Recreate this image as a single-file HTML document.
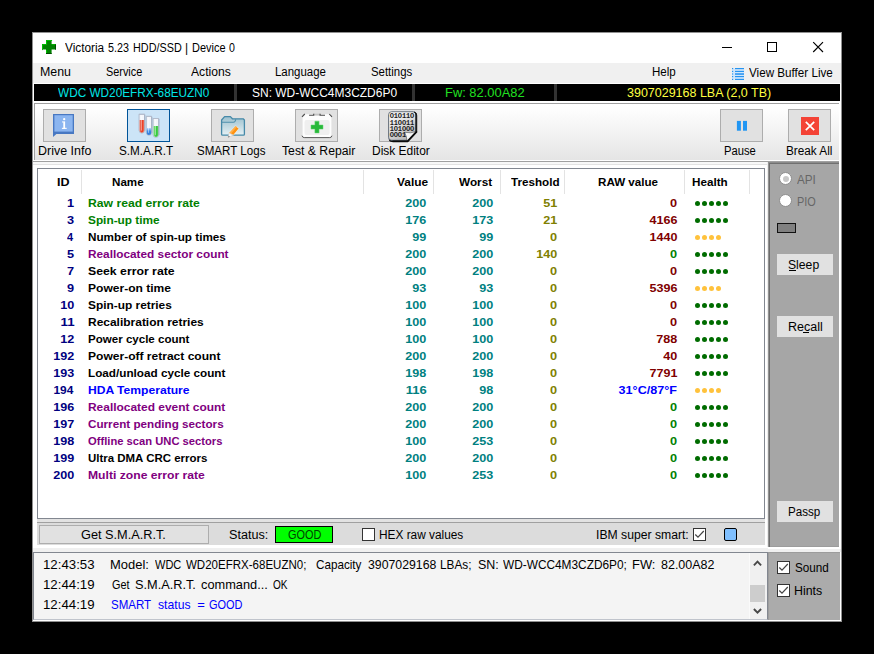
<!DOCTYPE html><html><head><meta charset="utf-8"><title>Victoria 5.23 HDD/SSD | Device 0</title><style>
html,body{margin:0;padding:0;background:#000;}
body{width:874px;height:654px;overflow:hidden;position:relative;font-family:"Liberation Sans",sans-serif;}
div,span,i,svg{position:absolute;box-sizing:border-box;}
.t{white-space:pre;font-style:normal;}
.d{width:5.2px;height:5.2px;border-radius:50%;}
.btn{background:#e1e1e1;border:1px solid #adadad;}
.pbtn{background:#e1e1e1;}
.sep{width:1px;background:#e3e3e3;top:170px;height:24px;}
.bsep{top:84px;height:17px;width:3px;background:#323232;}
.cb{width:13px;height:13px;background:#fff;border:1px solid #333;}
</style></head><body>
<div id="win" style="left:32px;top:32px;width:810px;height:590px;background:#fff;border:1px solid #909090;"></div>
<div id="titlebar" style="left:33px;top:33px;width:808px;height:30px;background:#fff;"></div>
<svg style="left:42px;top:40px" width="14" height="14" viewBox="0 0 14 14"><path d="M4 0h5.600v4.100h4.400v5.500h-4.400v4.400h-5.600v-4.400h-4v-5.500h4z" fill="#008200"/><path d="M4 14v-4.400M0 9.600v-5.500h4v-4.100h5.600" transform="translate(0.500,0.500)" stroke="#00c400" stroke-width="1" fill="none"/><path d="M9.600 4.100h4.400" transform="translate(0,0.500)" stroke="#00b400" stroke-width="1" fill="none"/><path d="M4 13.500h5.600M13.500 4.600v5" stroke="#004a00" stroke-width="1" fill="none"/></svg>
<svg style="left:715px;top:36px" width="120" height="22" viewBox="0 0 120 22"><g stroke="#000" stroke-width="1" fill="none"><path d="M7 11.500h10"/><rect x="52.500" y="6.500" width="9" height="9"/><path d="M98.200 6.200l9.800 9.800M108 6.200l-9.800 9.800" stroke-width="1.150"/></g></svg>
<div id="menubar" style="left:33px;top:63px;width:808px;height:20px;background:#f0f0f0;"></div>
<svg style="left:731px;top:67px" width="14" height="14" viewBox="0 0 14 14"><rect x="1" y="1.600" width="12" height="10.800" fill="#cfe6fb"/><rect x="4" y="6.400" width="9" height="1.400" fill="#6cb4f6"/><g fill="#1e90f0"><rect x="1" y="1.05" width="1.200" height="1.100"/><rect x="4" y="1.05" width="9" height="1.100"/><rect x="1" y="3.85" width="1.200" height="1.100"/><rect x="4" y="3.85" width="9" height="1.100"/><rect x="1" y="6.45" width="1.200" height="1.100"/><rect x="4" y="6.45" width="9" height="1.100"/><rect x="1" y="9.05" width="1.200" height="1.100"/><rect x="4" y="9.05" width="9" height="1.100"/><rect x="1" y="11.85" width="1.200" height="1.100"/><rect x="4" y="11.85" width="9" height="1.100"/></g></svg>
<div id="blackbar" style="left:34px;top:84px;width:806px;height:17px;background:#000;"></div>
<div class="bsep" style="left:234px"></div>
<div class="bsep" style="left:412px"></div>
<div class="bsep" style="left:554px"></div>
<div id="toolbar" style="left:34px;top:103px;width:805px;height:57px;background:linear-gradient(#fff 0,#fefefe 8%,#e5e5e5 100%);border-top:1px solid #a0a0a0;border-left:1px solid #a0a0a0;"></div>
<div style="left:33px;top:161px;width:806px;height:1px;background:#a0a0a0;"></div>
<div style="left:33px;top:162px;width:735px;height:2px;background:#f8f8f8;"></div>
<div style="left:33px;top:164px;width:735px;height:1px;background:#e3e3e3;"></div>
<div class="btn" style="left:43px;top:109px;width:43px;height:33px"></div>
<div class="btn" style="left:211px;top:109px;width:43px;height:33px"></div>
<div class="btn" style="left:295px;top:109px;width:43px;height:33px"></div>
<div class="btn" style="left:379px;top:109px;width:43px;height:33px"></div>
<div class="btn" style="left:720px;top:109px;width:43px;height:33px"></div>
<div class="btn" style="left:788px;top:109px;width:43px;height:33px"></div>
<div class="btn" style="left:127px;top:109px;width:43px;height:33px;background:#cce4f7;border-color:#005499"></div>
<svg style="left:52px;top:113px" width="24" height="25" viewBox="0 0 24 25"><path d="M1 0.900h21v20h-17.600l-3.400 3.200z" fill="#4878c2"/><rect x="2.400" y="2.200" width="18.300" height="16.400" fill="#8bb5f0"/><g fill="#fff"><circle cx="12.200" cy="6.200" r="1.150"/><rect x="11.300" y="8.400" width="1.800" height="7.500"/><rect x="10.100" y="8.400" width="1.400" height="1.100"/><rect x="9.900" y="14.800" width="4.800" height="1.100"/></g></svg>
<svg style="left:137px;top:112px" width="24" height="27" viewBox="0 0 24 27">
<defs><linearGradient id="gr" x1="0" x2="1"><stop offset="0" stop-color="#ec8070"/><stop offset="0.550" stop-color="#e83418"/><stop offset="1" stop-color="#f07c68"/></linearGradient>
<linearGradient id="gb" x1="0" x2="0" y1="0" y2="1"><stop offset="0" stop-color="#b8d8f8"/><stop offset="0.450" stop-color="#3c8ce8"/><stop offset="1" stop-color="#2c78d8"/></linearGradient>
<linearGradient id="gg" x1="0" x2="1"><stop offset="0" stop-color="#88e488"/><stop offset="0.550" stop-color="#30c838"/><stop offset="1" stop-color="#58d060"/></linearGradient></defs>
<path d="M2.1 2.3h5.5v16.05a2.75 2.75 0 0 1 -5.5 0z" fill="#f3f6fb" stroke="#a4aec2" stroke-width="0.800"/><path d="M2.50 8h4.70v10.35a2.35 2.35 0 0 1 -4.70 0z" fill="url(#gr)"/><path d="M4.41 3.3v15.30" stroke="#fff" stroke-opacity="0.600" stroke-width="0.800"/><path d="M7.90 2.8v16.05" stroke="#8c96b0" stroke-opacity="0.700" stroke-width="0.700"/><path d="M1.80 2.3h6.10" stroke="#b4bccc" stroke-width="1"/>
<path d="M9.3 4.4h5.3v16.25a2.65 2.65 0 0 1 -5.3 0z" fill="#f3f6fb" stroke="#a4aec2" stroke-width="0.800"/><path d="M9.70 16h4.50v4.65a2.25 2.25 0 0 1 -4.50 0z" fill="url(#gb)"/><path d="M11.53 5.4v15.40" stroke="#fff" stroke-opacity="0.600" stroke-width="0.800"/><path d="M14.90 4.9v16.25" stroke="#8c96b0" stroke-opacity="0.700" stroke-width="0.700"/><path d="M9.00 4.4h5.90" stroke="#b4bccc" stroke-width="1"/>
<path d="M16.1 6.5h5.6v16.10a2.80 2.80 0 0 1 -5.6 0z" fill="#f3f6fb" stroke="#a4aec2" stroke-width="0.800"/><path d="M16.50 13.9h4.80v8.70a2.40 2.40 0 0 1 -4.80 0z" fill="url(#gg)"/><path d="M18.45 7.5v15.40" stroke="#fff" stroke-opacity="0.600" stroke-width="0.800"/><path d="M22.00 7.0v16.10" stroke="#8c96b0" stroke-opacity="0.700" stroke-width="0.700"/><path d="M15.80 6.5h6.20" stroke="#b4bccc" stroke-width="1"/>
</svg>
<svg style="left:220px;top:115px" width="27" height="24" viewBox="0 0 27 24">
<defs><linearGradient id="gf" x1="0" x2="0" y1="0" y2="1"><stop offset="0" stop-color="#9cc0ce"/><stop offset="0.450" stop-color="#bdd6df"/><stop offset="1" stop-color="#e6f1f5"/></linearGradient></defs>
<path d="M1.600 5l3-3.400h5.800l2 2.200h10.800l1.200 1.200v14.200q0 1-1 1h-20.800q-1 0-1-1z" fill="url(#gf)" stroke="#4689a8" stroke-width="1.300" stroke-linejoin="round"/>
<path d="M1.600 7.200h11.800q2 0 2.300-3" fill="none" stroke="#4e8fac" stroke-width="1.100"/>
<path d="M15.700 10.900l3.200 2.700-5.600 6.700-4.200-2.400z" fill="#ff9210" stroke="#fff" stroke-opacity="0.700" stroke-width="0.700"/>
<path d="M15.700 10.900l1.200 1-6.200 7-1.600-1z" fill="#ffae48"/>
<path d="M9.100 17.900l4.200 2.400-5.300 2.100z" fill="#f6f6f6" stroke="#c4c4c4" stroke-width="0.500"/>
<path d="M8 22.400l1.900-0.750-1.200-1z" fill="#666"/>
</svg>
<svg style="left:301px;top:112px" width="33" height="27" viewBox="0 0 33 27">
<path d="M3.600 2.300h24.800q2 0 2 2v19.200q0 2-2 2h-24.800q-2 0-2-2v-19.200q0-2 2-2z" fill="#fdfdfd"/>
<rect x="3.500" y="8.100" width="25.100" height="15" rx="2" fill="#efefef"/>
<rect x="12.700" y="1.700" width="6.400" height="1.900" fill="#c4c4c4"/>
<g stroke="#4a4a4a" stroke-width="1.100" fill="none"><path d="M1 4.900l2.800-2.900"/><path d="M28.300 2l2.700 2.900"/><path d="M8.100 3.200h4.600v-1.500"/><path d="M24 3.200h-4.900v-1.500"/></g>
<path d="M1 23.700q0.500 1.900 2.200 1.900h25.600q1.700 0 2.200-1.900" stroke="#5a5a5a" stroke-width="1" fill="none"/>
<path d="M13.900 9.200h4.150v3.800h3.950v4.100h-3.950v3.800h-4.150v-3.800h-3.900v-4.100h3.900z" fill="#28b83a" stroke="#62d470" stroke-width="0.500"/>
</svg>
<svg style="left:387px;top:110px" width="32" height="33" viewBox="0 0 32 33">
<defs><linearGradient id="ge" x1="0" x2="0.600" y1="0" y2="1"><stop offset="0" stop-color="#fbfbfb"/><stop offset="0.550" stop-color="#dedede"/><stop offset="1" stop-color="#b4b4b4"/></linearGradient></defs>
<path d="M5 2.200h22q3.200 0 3.200 3.200v16.800l-9.200 9.800h-16q-3.200 0-3.200-3.200v-23.400q0-3.200 3.200-3.200z" fill="#0a0a0a"/>
<path d="M4.600 1.700h21.400q3 0 3 3v16.200l-8.600 9.400h-15.800q-3 0-3-3v-22.600q0-3 3-3z" fill="url(#ge)" stroke="#5c6874" stroke-width="0.900"/>
<path d="M29 20.900v-15.900q0-2.600-2-3" fill="none" stroke="#111" stroke-width="1.200"/>
<path d="M29.300 21.400l-9.200 9.500q-0.400-4.600-2.500-8.600q6.400 1.400 11.700-0.900z" fill="#f6f6f6" stroke="#333" stroke-width="0.500"/>
<path d="M29.800 21.400l-9.300 10h-15" fill="none" stroke="#0a0a0a" stroke-width="1.600"/>
<g font-family="Liberation Mono, monospace" font-weight="700" font-size="7" fill="#1a1a1a" letter-spacing="-0.170">
<text x="2.800" y="7.900">O1O11O</text><text x="2.800" y="14.500">11OO11</text><text x="2.800" y="20.900">1O1OOO</text><text x="2.800" y="26.900">OOO1</text></g>
</svg>
<svg style="left:736px;top:120px" width="12" height="12" viewBox="0 0 12 12"><rect x="0.900" y="0.900" width="4" height="9.800" fill="#2196f3"/><rect x="7" y="0.900" width="4" height="9.800" fill="#2196f3"/></svg>
<svg style="left:801px;top:117px" width="18" height="18" viewBox="0 0 18 18"><rect width="18" height="18" fill="#f44336"/><path d="M4.800 4.800l8.400 8.400M13.200 4.800l-8.400 8.400" stroke="#fff" stroke-width="1.700"/></svg>
<div id="list" style="left:37px;top:168px;width:728px;height:351px;background:#fff;border:1px solid #828790;"></div>
<div class="sep" style="left:81px"></div>
<div class="sep" style="left:363px"></div>
<div class="sep" style="left:433px"></div>
<div class="sep" style="left:500px"></div>
<div class="sep" style="left:564px"></div>
<div class="sep" style="left:684px"></div>
<div class="sep" style="left:749px"></div>
<div style="left:767px;top:162px;width:1px;height:385px;background:#ececec;"></div>
<div id="rpanel" style="left:768px;top:162px;width:71px;height:385px;background:#a6a6a6;border-left:1px solid #929292;border-top:1px solid #8c8c8c;border-bottom:1px solid #9c9c9c;"></div>
<div style="left:769px;top:163px;width:70px;height:1px;background:#707070;"></div>
<div style="left:769px;top:163px;width:1px;height:384px;background:#6c6c6c;"></div>
<div style="left:779px;top:172px;width:13px;height:13px;border-radius:50%;background:#fff;border:1px solid #8e8e8e;"></div>
<div style="left:782.500px;top:175.500px;width:6px;height:6px;border-radius:50%;background:#c8c8c8;"></div>
<div style="left:779px;top:194px;width:13px;height:13px;border-radius:50%;background:#fff;border:1px solid #8e8e8e;"></div>
<div style="left:777px;top:223px;width:19px;height:10px;background:#808080;border:1px solid #111;"></div>
<div class="pbtn" style="left:777px;top:254px;width:56px;height:21px"></div>
<div class="pbtn" style="left:777px;top:316px;width:56px;height:21px"></div>
<div class="pbtn" style="left:777px;top:501px;width:56px;height:21px"></div>
<div style="left:788.500px;top:270px;width:7px;height:1px;background:#000"></div>
<div style="left:803px;top:332px;width:6px;height:1px;background:#000"></div>
<div style="left:37px;top:519px;width:728px;height:3px;background:#e2e2e2;"></div>
<div id="status" style="left:37px;top:522px;width:728px;height:23px;background:#dcdcdc;border-top:1px solid #a0a0a0;"></div>
<div class="btn" style="left:39px;top:525px;width:170px;height:19px;background:#e1e1e1"></div>
<div style="left:275px;top:526px;width:58px;height:17px;background:#00ff00;border:1px solid #000"></div>
<div class="cb" style="left:362px;top:528px"></div>
<div class="cb" style="left:693px;top:528px"></div>
<svg style="left:693px;top:528px" width="13" height="13" viewBox="0 0 13 13"><path d="M2.300 6.500l2.700 2.700l5.800-6.200" stroke="#444" stroke-width="1.200" fill="none"/></svg>
<div style="left:724px;top:528px;width:13px;height:13px;background:#80c0ff;border:1px solid #000;border-radius:2px"></div>
<div style="left:33px;top:548px;width:735px;height:4px;background:#f0f0f0;"></div>
<div style="left:768px;top:549px;width:73px;height:3px;background:#f0f0f0;"></div>
<div id="log" style="left:33px;top:552px;width:735px;height:68px;background:#f4f4f4;border:1px solid #828790;border-bottom-color:#c0c4cc;"></div>
<div id="scroll" style="left:749px;top:553px;width:18px;height:66px;background:#f0f0f0;border-left:1px solid #fafafa;"></div>
<div style="left:750px;top:585px;width:15px;height:17px;background:#cdcdcd;"></div>
<svg style="left:749px;top:553px" width="18" height="66" viewBox="0 0 18 66"><g stroke="#484848" stroke-width="1.900" fill="none"><path d="M4.900 12.300l3.600-3.700 3.600 3.700"/><path d="M4.900 56l3.600 3.700 3.600-3.700"/></g></svg>
<div id="rpanel2" style="left:768px;top:552px;width:72px;height:68px;background:#ababab;border-left:1px solid #9c9c9c;border-top:1px solid #9c9c9c;"></div>
<div class="cb" style="left:777px;top:561px"></div>
<svg style="left:777px;top:561px" width="13" height="13" viewBox="0 0 13 13"><path d="M2.300 6.500l2.700 2.700l5.800-6.200" stroke="#444" stroke-width="1.200" fill="none"/></svg>
<div class="cb" style="left:777px;top:584px"></div>
<svg style="left:777px;top:584px" width="13" height="13" viewBox="0 0 13 13"><path d="M2.300 6.500l2.700 2.700l5.800-6.200" stroke="#444" stroke-width="1.200" fill="none"/></svg>
<i class="d" style="left:694.85px;top:200.80px;background:#006c00"></i>
<i class="d" style="left:701.83px;top:200.80px;background:#006c00"></i>
<i class="d" style="left:708.81px;top:200.80px;background:#006c00"></i>
<i class="d" style="left:715.79px;top:200.80px;background:#006c00"></i>
<i class="d" style="left:722.77px;top:200.80px;background:#006c00"></i>
<i class="d" style="left:694.85px;top:217.80px;background:#006c00"></i>
<i class="d" style="left:701.83px;top:217.80px;background:#006c00"></i>
<i class="d" style="left:708.81px;top:217.80px;background:#006c00"></i>
<i class="d" style="left:715.79px;top:217.80px;background:#006c00"></i>
<i class="d" style="left:722.77px;top:217.80px;background:#006c00"></i>
<i class="d" style="left:694.85px;top:234.80px;background:#ffc23c"></i>
<i class="d" style="left:701.83px;top:234.80px;background:#ffc23c"></i>
<i class="d" style="left:708.81px;top:234.80px;background:#ffc23c"></i>
<i class="d" style="left:715.79px;top:234.80px;background:#ffc23c"></i>
<i class="d" style="left:694.85px;top:251.80px;background:#006c00"></i>
<i class="d" style="left:701.83px;top:251.80px;background:#006c00"></i>
<i class="d" style="left:708.81px;top:251.80px;background:#006c00"></i>
<i class="d" style="left:715.79px;top:251.80px;background:#006c00"></i>
<i class="d" style="left:722.77px;top:251.80px;background:#006c00"></i>
<i class="d" style="left:694.85px;top:268.80px;background:#006c00"></i>
<i class="d" style="left:701.83px;top:268.80px;background:#006c00"></i>
<i class="d" style="left:708.81px;top:268.80px;background:#006c00"></i>
<i class="d" style="left:715.79px;top:268.80px;background:#006c00"></i>
<i class="d" style="left:722.77px;top:268.80px;background:#006c00"></i>
<i class="d" style="left:694.85px;top:285.80px;background:#ffc23c"></i>
<i class="d" style="left:701.83px;top:285.80px;background:#ffc23c"></i>
<i class="d" style="left:708.81px;top:285.80px;background:#ffc23c"></i>
<i class="d" style="left:715.79px;top:285.80px;background:#ffc23c"></i>
<i class="d" style="left:694.85px;top:302.80px;background:#006c00"></i>
<i class="d" style="left:701.83px;top:302.80px;background:#006c00"></i>
<i class="d" style="left:708.81px;top:302.80px;background:#006c00"></i>
<i class="d" style="left:715.79px;top:302.80px;background:#006c00"></i>
<i class="d" style="left:722.77px;top:302.80px;background:#006c00"></i>
<i class="d" style="left:694.85px;top:319.80px;background:#006c00"></i>
<i class="d" style="left:701.83px;top:319.80px;background:#006c00"></i>
<i class="d" style="left:708.81px;top:319.80px;background:#006c00"></i>
<i class="d" style="left:715.79px;top:319.80px;background:#006c00"></i>
<i class="d" style="left:722.77px;top:319.80px;background:#006c00"></i>
<i class="d" style="left:694.85px;top:336.80px;background:#006c00"></i>
<i class="d" style="left:701.83px;top:336.80px;background:#006c00"></i>
<i class="d" style="left:708.81px;top:336.80px;background:#006c00"></i>
<i class="d" style="left:715.79px;top:336.80px;background:#006c00"></i>
<i class="d" style="left:722.77px;top:336.80px;background:#006c00"></i>
<i class="d" style="left:694.85px;top:353.80px;background:#006c00"></i>
<i class="d" style="left:701.83px;top:353.80px;background:#006c00"></i>
<i class="d" style="left:708.81px;top:353.80px;background:#006c00"></i>
<i class="d" style="left:715.79px;top:353.80px;background:#006c00"></i>
<i class="d" style="left:722.77px;top:353.80px;background:#006c00"></i>
<i class="d" style="left:694.85px;top:370.80px;background:#006c00"></i>
<i class="d" style="left:701.83px;top:370.80px;background:#006c00"></i>
<i class="d" style="left:708.81px;top:370.80px;background:#006c00"></i>
<i class="d" style="left:715.79px;top:370.80px;background:#006c00"></i>
<i class="d" style="left:722.77px;top:370.80px;background:#006c00"></i>
<i class="d" style="left:694.85px;top:387.80px;background:#ffc23c"></i>
<i class="d" style="left:701.83px;top:387.80px;background:#ffc23c"></i>
<i class="d" style="left:708.81px;top:387.80px;background:#ffc23c"></i>
<i class="d" style="left:715.79px;top:387.80px;background:#ffc23c"></i>
<i class="d" style="left:694.85px;top:404.80px;background:#006c00"></i>
<i class="d" style="left:701.83px;top:404.80px;background:#006c00"></i>
<i class="d" style="left:708.81px;top:404.80px;background:#006c00"></i>
<i class="d" style="left:715.79px;top:404.80px;background:#006c00"></i>
<i class="d" style="left:722.77px;top:404.80px;background:#006c00"></i>
<i class="d" style="left:694.85px;top:421.80px;background:#006c00"></i>
<i class="d" style="left:701.83px;top:421.80px;background:#006c00"></i>
<i class="d" style="left:708.81px;top:421.80px;background:#006c00"></i>
<i class="d" style="left:715.79px;top:421.80px;background:#006c00"></i>
<i class="d" style="left:722.77px;top:421.80px;background:#006c00"></i>
<i class="d" style="left:694.85px;top:438.80px;background:#006c00"></i>
<i class="d" style="left:701.83px;top:438.80px;background:#006c00"></i>
<i class="d" style="left:708.81px;top:438.80px;background:#006c00"></i>
<i class="d" style="left:715.79px;top:438.80px;background:#006c00"></i>
<i class="d" style="left:722.77px;top:438.80px;background:#006c00"></i>
<i class="d" style="left:694.85px;top:455.80px;background:#006c00"></i>
<i class="d" style="left:701.83px;top:455.80px;background:#006c00"></i>
<i class="d" style="left:708.81px;top:455.80px;background:#006c00"></i>
<i class="d" style="left:715.79px;top:455.80px;background:#006c00"></i>
<i class="d" style="left:722.77px;top:455.80px;background:#006c00"></i>
<i class="d" style="left:694.85px;top:472.80px;background:#006c00"></i>
<i class="d" style="left:701.83px;top:472.80px;background:#006c00"></i>
<i class="d" style="left:708.81px;top:472.80px;background:#006c00"></i>
<i class="d" style="left:715.79px;top:472.80px;background:#006c00"></i>
<i class="d" style="left:722.77px;top:472.80px;background:#006c00"></i>
<span class="t" style="top:41px;line-height:14px;height:14px;font-size:12px;color:#000;left:65.30px;transform-origin:0 50%;transform:scaleX(0.9845);">Victoria</span>
<span class="t" style="top:41px;line-height:14px;height:14px;font-size:12px;color:#000;left:108.30px;transform-origin:0 50%;transform:scaleX(0.8952);">5.23</span>
<span class="t" style="top:41px;line-height:14px;height:14px;font-size:12px;color:#000;left:132.70px;transform-origin:0 50%;transform:scaleX(0.9017);">HDD/SSD</span>
<span class="t" style="top:41px;line-height:14px;height:14px;font-size:12px;color:#000;left:185.00px;transform-origin:0 50%;transform:scaleX(1.0000);">|</span>
<span class="t" style="top:41px;line-height:14px;height:14px;font-size:12px;color:#000;left:191.70px;transform-origin:0 50%;transform:scaleX(0.9134);">Device</span>
<span class="t" style="top:41px;line-height:14px;height:14px;font-size:12px;color:#000;left:229.00px;transform-origin:0 50%;transform:scaleX(0.8857);">0</span>
<span class="t" style="top:65px;line-height:14px;height:14px;font-size:12px;color:#000;left:40.00px;transform-origin:0 50%;transform:scaleX(1.0326);">Menu</span>
<span class="t" style="top:65px;line-height:14px;height:14px;font-size:12px;color:#000;left:106.30px;transform-origin:0 50%;transform:scaleX(0.9048);">Service</span>
<span class="t" style="top:65px;line-height:14px;height:14px;font-size:12px;color:#000;left:190.50px;transform-origin:0 50%;transform:scaleX(1.0114);">Actions</span>
<span class="t" style="top:65px;line-height:14px;height:14px;font-size:12px;color:#000;left:274.50px;transform-origin:0 50%;transform:scaleX(0.9550);">Language</span>
<span class="t" style="top:65px;line-height:14px;height:14px;font-size:12px;color:#000;left:371.00px;transform-origin:0 50%;transform:scaleX(0.9502);">Settings</span>
<span class="t" style="top:65px;line-height:14px;height:14px;font-size:12px;color:#000;left:651.60px;transform-origin:0 50%;transform:scaleX(0.9638);">Help</span>
<span class="t" style="top:66px;line-height:14px;height:14px;font-size:12px;color:#000;left:749.20px;transform-origin:0 50%;transform:scaleX(0.9711);">View Buffer Live</span>
<span class="t" style="top:86px;line-height:14px;height:14px;font-size:12.5px;color:#00e6e6;left:58.20px;transform-origin:0 50%;transform:scaleX(0.9434);">WDC WD20EFRX-68EUZN0</span>
<span class="t" style="top:86px;line-height:14px;height:14px;font-size:12.5px;color:#ffffff;left:251.90px;transform-origin:0 50%;transform:scaleX(0.9581);">SN: WD-WCC4M3CZD6P0</span>
<span class="t" style="top:86px;line-height:14px;height:14px;font-size:12.5px;color:#20e020;left:444.67px;transform-origin:0 50%;transform:scaleX(1.0318);">Fw: 82.00A82</span>
<span class="t" style="top:86px;line-height:14px;height:14px;font-size:12.5px;color:#ffff40;left:627.10px;transform-origin:0 50%;transform:scaleX(0.9988);">3907029168 LBA (2,0 TB)</span>
<span class="t" style="top:144px;line-height:14px;height:14px;font-size:12.5px;color:#000;left:38.40px;transform-origin:0 50%;transform:scaleX(0.9973);">Drive Info</span>
<span class="t" style="top:144px;line-height:14px;height:14px;font-size:12.5px;color:#000;left:119.40px;transform-origin:0 50%;transform:scaleX(0.9378);">S.M.A.R.T</span>
<span class="t" style="top:144px;line-height:14px;height:14px;font-size:12.5px;color:#000;left:197.10px;transform-origin:0 50%;transform:scaleX(0.9262);">SMART Logs</span>
<span class="t" style="top:144px;line-height:14px;height:14px;font-size:12.5px;color:#000;left:282.00px;transform-origin:0 50%;transform:scaleX(0.9777);">Test &amp; Repair</span>
<span class="t" style="top:144px;line-height:14px;height:14px;font-size:12.5px;color:#000;left:372.34px;transform-origin:0 50%;transform:scaleX(0.9567);">Disk Editor</span>
<span class="t" style="top:144px;line-height:14px;height:14px;font-size:12.5px;color:#000;left:723.60px;transform-origin:0 50%;transform:scaleX(0.8959);">Pause</span>
<span class="t" style="top:144px;line-height:14px;height:14px;font-size:12.5px;color:#000;left:785.76px;transform-origin:0 50%;transform:scaleX(0.9411);">Break All</span>
<span class="t" style="top:176px;line-height:12px;height:12px;font-size:11px;color:#000;font-weight:700;left:57.20px;transform-origin:0 50%;transform:scaleX(1.1396);">ID</span>
<span class="t" style="top:176px;line-height:12px;height:12px;font-size:11px;color:#000;font-weight:700;left:112.40px;transform-origin:0 50%;transform:scaleX(1.0555);">Name</span>
<span class="t" style="top:176px;line-height:12px;height:12px;font-size:11px;color:#000;font-weight:700;left:397.00px;transform-origin:0 50%;transform:scaleX(1.0830);">Value</span>
<span class="t" style="top:176px;line-height:12px;height:12px;font-size:11px;color:#000;font-weight:700;left:458.80px;transform-origin:0 50%;transform:scaleX(1.0702);">Worst</span>
<span class="t" style="top:176px;line-height:12px;height:12px;font-size:11px;color:#000;font-weight:700;left:510.70px;transform-origin:0 50%;transform:scaleX(1.0593);">Treshold</span>
<span class="t" style="top:176px;line-height:12px;height:12px;font-size:11px;color:#000;font-weight:700;left:597.80px;transform-origin:0 50%;transform:scaleX(1.0559);">RAW value</span>
<span class="t" style="top:176px;line-height:12px;height:12px;font-size:11px;color:#000;font-weight:700;left:691.50px;transform-origin:0 50%;transform:scaleX(1.0620);">Health</span>
<span class="t" style="top:197px;line-height:12px;height:12px;font-size:11px;color:#000080;font-weight:700;right:799.86px;transform-origin:100% 50%;transform:scaleX(1.1583);">1</span>
<span class="t" style="top:197px;line-height:12px;height:12px;font-size:11px;color:#008000;font-weight:700;left:88.30px;transform-origin:0 50%;transform:scaleX(1.1076);">Raw read error rate</span>
<span class="t" style="top:197px;line-height:12px;height:12px;font-size:11px;color:#008080;font-weight:700;right:447.37px;transform-origin:100% 50%;transform:scaleX(1.1434);">200</span>
<span class="t" style="top:197px;line-height:12px;height:12px;font-size:11px;color:#008080;font-weight:700;right:380.37px;transform-origin:100% 50%;transform:scaleX(1.1434);">200</span>
<span class="t" style="top:197px;line-height:12px;height:12px;font-size:11px;color:#808000;font-weight:700;right:316.87px;transform-origin:100% 50%;transform:scaleX(1.1471);">51</span>
<span class="t" style="top:197px;line-height:12px;height:12px;font-size:11px;color:#800000;font-weight:700;right:196.76px;transform-origin:100% 50%;transform:scaleX(1.1583);">0</span>
<span class="t" style="top:214px;line-height:12px;height:12px;font-size:11px;color:#000080;font-weight:700;right:799.86px;transform-origin:100% 50%;transform:scaleX(1.1583);">3</span>
<span class="t" style="top:214px;line-height:12px;height:12px;font-size:11px;color:#008000;font-weight:700;left:88.30px;transform-origin:0 50%;transform:scaleX(1.0754);">Spin-up time</span>
<span class="t" style="top:214px;line-height:12px;height:12px;font-size:11px;color:#008080;font-weight:700;right:447.37px;transform-origin:100% 50%;transform:scaleX(1.1434);">176</span>
<span class="t" style="top:214px;line-height:12px;height:12px;font-size:11px;color:#008080;font-weight:700;right:380.37px;transform-origin:100% 50%;transform:scaleX(1.1434);">173</span>
<span class="t" style="top:214px;line-height:12px;height:12px;font-size:11px;color:#808000;font-weight:700;right:316.87px;transform-origin:100% 50%;transform:scaleX(1.1471);">21</span>
<span class="t" style="top:214px;line-height:12px;height:12px;font-size:11px;color:#800000;font-weight:700;right:196.77px;transform-origin:100% 50%;transform:scaleX(1.1415);">4166</span>
<span class="t" style="top:231px;line-height:12px;height:12px;font-size:11px;color:#000080;font-weight:700;right:800.88px;transform-origin:100% 50%;transform:scaleX(0.9929);">4</span>
<span class="t" style="top:231px;line-height:12px;height:12px;font-size:11px;color:#000000;font-weight:700;left:88.30px;transform-origin:0 50%;transform:scaleX(1.0638);">Number of spin-up times</span>
<span class="t" style="top:231px;line-height:12px;height:12px;font-size:11px;color:#008080;font-weight:700;right:447.37px;transform-origin:100% 50%;transform:scaleX(1.1471);">99</span>
<span class="t" style="top:231px;line-height:12px;height:12px;font-size:11px;color:#008080;font-weight:700;right:380.37px;transform-origin:100% 50%;transform:scaleX(1.1471);">99</span>
<span class="t" style="top:231px;line-height:12px;height:12px;font-size:11px;color:#808000;font-weight:700;right:316.86px;transform-origin:100% 50%;transform:scaleX(1.1583);">0</span>
<span class="t" style="top:231px;line-height:12px;height:12px;font-size:11px;color:#800000;font-weight:700;right:196.77px;transform-origin:100% 50%;transform:scaleX(1.1415);">1440</span>
<span class="t" style="top:248px;line-height:12px;height:12px;font-size:11px;color:#000080;font-weight:700;right:799.86px;transform-origin:100% 50%;transform:scaleX(1.1583);">5</span>
<span class="t" style="top:248px;line-height:12px;height:12px;font-size:11px;color:#800080;font-weight:700;left:88.30px;transform-origin:0 50%;transform:scaleX(1.0743);">Reallocated sector count</span>
<span class="t" style="top:248px;line-height:12px;height:12px;font-size:11px;color:#008080;font-weight:700;right:447.37px;transform-origin:100% 50%;transform:scaleX(1.1434);">200</span>
<span class="t" style="top:248px;line-height:12px;height:12px;font-size:11px;color:#008080;font-weight:700;right:380.37px;transform-origin:100% 50%;transform:scaleX(1.1434);">200</span>
<span class="t" style="top:248px;line-height:12px;height:12px;font-size:11px;color:#808000;font-weight:700;right:316.87px;transform-origin:100% 50%;transform:scaleX(1.1434);">140</span>
<span class="t" style="top:248px;line-height:12px;height:12px;font-size:11px;color:#008000;font-weight:700;right:196.76px;transform-origin:100% 50%;transform:scaleX(1.1583);">0</span>
<span class="t" style="top:265px;line-height:12px;height:12px;font-size:11px;color:#000080;font-weight:700;right:799.86px;transform-origin:100% 50%;transform:scaleX(1.1583);">7</span>
<span class="t" style="top:265px;line-height:12px;height:12px;font-size:11px;color:#000000;font-weight:700;left:88.30px;transform-origin:0 50%;transform:scaleX(1.1155);">Seek error rate</span>
<span class="t" style="top:265px;line-height:12px;height:12px;font-size:11px;color:#008080;font-weight:700;right:447.37px;transform-origin:100% 50%;transform:scaleX(1.1434);">200</span>
<span class="t" style="top:265px;line-height:12px;height:12px;font-size:11px;color:#008080;font-weight:700;right:380.37px;transform-origin:100% 50%;transform:scaleX(1.1434);">200</span>
<span class="t" style="top:265px;line-height:12px;height:12px;font-size:11px;color:#808000;font-weight:700;right:316.86px;transform-origin:100% 50%;transform:scaleX(1.1583);">0</span>
<span class="t" style="top:265px;line-height:12px;height:12px;font-size:11px;color:#800000;font-weight:700;right:196.76px;transform-origin:100% 50%;transform:scaleX(1.1583);">0</span>
<span class="t" style="top:282px;line-height:12px;height:12px;font-size:11px;color:#000080;font-weight:700;right:799.86px;transform-origin:100% 50%;transform:scaleX(1.1583);">9</span>
<span class="t" style="top:282px;line-height:12px;height:12px;font-size:11px;color:#000000;font-weight:700;left:88.30px;transform-origin:0 50%;transform:scaleX(1.0956);">Power-on time</span>
<span class="t" style="top:282px;line-height:12px;height:12px;font-size:11px;color:#008080;font-weight:700;right:447.37px;transform-origin:100% 50%;transform:scaleX(1.1471);">93</span>
<span class="t" style="top:282px;line-height:12px;height:12px;font-size:11px;color:#008080;font-weight:700;right:380.37px;transform-origin:100% 50%;transform:scaleX(1.1471);">93</span>
<span class="t" style="top:282px;line-height:12px;height:12px;font-size:11px;color:#808000;font-weight:700;right:316.86px;transform-origin:100% 50%;transform:scaleX(1.1583);">0</span>
<span class="t" style="top:282px;line-height:12px;height:12px;font-size:11px;color:#800000;font-weight:700;right:196.77px;transform-origin:100% 50%;transform:scaleX(1.1415);">5396</span>
<span class="t" style="top:299px;line-height:12px;height:12px;font-size:11px;color:#000080;font-weight:700;right:799.87px;transform-origin:100% 50%;transform:scaleX(1.1471);">10</span>
<span class="t" style="top:299px;line-height:12px;height:12px;font-size:11px;color:#000000;font-weight:700;left:88.30px;transform-origin:0 50%;transform:scaleX(1.0799);">Spin-up retries</span>
<span class="t" style="top:299px;line-height:12px;height:12px;font-size:11px;color:#008080;font-weight:700;right:447.37px;transform-origin:100% 50%;transform:scaleX(1.1434);">100</span>
<span class="t" style="top:299px;line-height:12px;height:12px;font-size:11px;color:#008080;font-weight:700;right:380.37px;transform-origin:100% 50%;transform:scaleX(1.1434);">100</span>
<span class="t" style="top:299px;line-height:12px;height:12px;font-size:11px;color:#808000;font-weight:700;right:316.86px;transform-origin:100% 50%;transform:scaleX(1.1583);">0</span>
<span class="t" style="top:299px;line-height:12px;height:12px;font-size:11px;color:#800000;font-weight:700;right:196.76px;transform-origin:100% 50%;transform:scaleX(1.1583);">0</span>
<span class="t" style="top:316px;line-height:12px;height:12px;font-size:11px;color:#000080;font-weight:700;right:799.86px;transform-origin:100% 50%;transform:scaleX(1.2076);">11</span>
<span class="t" style="top:316px;line-height:12px;height:12px;font-size:11px;color:#000000;font-weight:700;left:88.30px;transform-origin:0 50%;transform:scaleX(1.0879);">Recalibration retries</span>
<span class="t" style="top:316px;line-height:12px;height:12px;font-size:11px;color:#008080;font-weight:700;right:447.37px;transform-origin:100% 50%;transform:scaleX(1.1434);">100</span>
<span class="t" style="top:316px;line-height:12px;height:12px;font-size:11px;color:#008080;font-weight:700;right:380.37px;transform-origin:100% 50%;transform:scaleX(1.1434);">100</span>
<span class="t" style="top:316px;line-height:12px;height:12px;font-size:11px;color:#808000;font-weight:700;right:316.86px;transform-origin:100% 50%;transform:scaleX(1.1583);">0</span>
<span class="t" style="top:316px;line-height:12px;height:12px;font-size:11px;color:#800000;font-weight:700;right:196.76px;transform-origin:100% 50%;transform:scaleX(1.1583);">0</span>
<span class="t" style="top:333px;line-height:12px;height:12px;font-size:11px;color:#000080;font-weight:700;right:799.87px;transform-origin:100% 50%;transform:scaleX(1.1471);">12</span>
<span class="t" style="top:333px;line-height:12px;height:12px;font-size:11px;color:#000000;font-weight:700;left:88.30px;transform-origin:0 50%;transform:scaleX(1.0503);">Power cycle count</span>
<span class="t" style="top:333px;line-height:12px;height:12px;font-size:11px;color:#008080;font-weight:700;right:447.37px;transform-origin:100% 50%;transform:scaleX(1.1434);">100</span>
<span class="t" style="top:333px;line-height:12px;height:12px;font-size:11px;color:#008080;font-weight:700;right:380.37px;transform-origin:100% 50%;transform:scaleX(1.1434);">100</span>
<span class="t" style="top:333px;line-height:12px;height:12px;font-size:11px;color:#808000;font-weight:700;right:316.86px;transform-origin:100% 50%;transform:scaleX(1.1583);">0</span>
<span class="t" style="top:333px;line-height:12px;height:12px;font-size:11px;color:#800000;font-weight:700;right:196.77px;transform-origin:100% 50%;transform:scaleX(1.1434);">788</span>
<span class="t" style="top:350px;line-height:12px;height:12px;font-size:11px;color:#000080;font-weight:700;right:799.87px;transform-origin:100% 50%;transform:scaleX(1.1434);">192</span>
<span class="t" style="top:350px;line-height:12px;height:12px;font-size:11px;color:#000000;font-weight:700;left:88.30px;transform-origin:0 50%;transform:scaleX(1.0944);">Power-off retract count</span>
<span class="t" style="top:350px;line-height:12px;height:12px;font-size:11px;color:#008080;font-weight:700;right:447.37px;transform-origin:100% 50%;transform:scaleX(1.1434);">200</span>
<span class="t" style="top:350px;line-height:12px;height:12px;font-size:11px;color:#008080;font-weight:700;right:380.37px;transform-origin:100% 50%;transform:scaleX(1.1434);">200</span>
<span class="t" style="top:350px;line-height:12px;height:12px;font-size:11px;color:#808000;font-weight:700;right:316.86px;transform-origin:100% 50%;transform:scaleX(1.1583);">0</span>
<span class="t" style="top:350px;line-height:12px;height:12px;font-size:11px;color:#800000;font-weight:700;right:196.77px;transform-origin:100% 50%;transform:scaleX(1.1471);">40</span>
<span class="t" style="top:367px;line-height:12px;height:12px;font-size:11px;color:#000080;font-weight:700;right:799.87px;transform-origin:100% 50%;transform:scaleX(1.1434);">193</span>
<span class="t" style="top:367px;line-height:12px;height:12px;font-size:11px;color:#000000;font-weight:700;left:88.30px;transform-origin:0 50%;transform:scaleX(1.0650);">Load/unload cycle count</span>
<span class="t" style="top:367px;line-height:12px;height:12px;font-size:11px;color:#008080;font-weight:700;right:447.37px;transform-origin:100% 50%;transform:scaleX(1.1434);">198</span>
<span class="t" style="top:367px;line-height:12px;height:12px;font-size:11px;color:#008080;font-weight:700;right:380.37px;transform-origin:100% 50%;transform:scaleX(1.1434);">198</span>
<span class="t" style="top:367px;line-height:12px;height:12px;font-size:11px;color:#808000;font-weight:700;right:316.86px;transform-origin:100% 50%;transform:scaleX(1.1583);">0</span>
<span class="t" style="top:367px;line-height:12px;height:12px;font-size:11px;color:#800000;font-weight:700;right:196.77px;transform-origin:100% 50%;transform:scaleX(1.1415);">7791</span>
<span class="t" style="top:384px;line-height:12px;height:12px;font-size:11px;color:#000080;font-weight:700;right:800.96px;transform-origin:100% 50%;transform:scaleX(1.0839);">194</span>
<span class="t" style="top:384px;line-height:12px;height:12px;font-size:11px;color:#0000ff;font-weight:700;left:88.30px;transform-origin:0 50%;transform:scaleX(1.0995);">HDA Temperature</span>
<span class="t" style="top:384px;line-height:12px;height:12px;font-size:11px;color:#008080;font-weight:700;right:447.36px;transform-origin:100% 50%;transform:scaleX(1.1827);">116</span>
<span class="t" style="top:384px;line-height:12px;height:12px;font-size:11px;color:#008080;font-weight:700;right:380.37px;transform-origin:100% 50%;transform:scaleX(1.1471);">98</span>
<span class="t" style="top:384px;line-height:12px;height:12px;font-size:11px;color:#808000;font-weight:700;right:316.86px;transform-origin:100% 50%;transform:scaleX(1.1583);">0</span>
<span class="t" style="top:384px;line-height:12px;height:12px;font-size:11px;color:#0000ff;font-weight:700;right:197.22px;transform-origin:100% 50%;transform:scaleX(1.1450);">31°C/87°F</span>
<span class="t" style="top:401px;line-height:12px;height:12px;font-size:11px;color:#000080;font-weight:700;right:799.87px;transform-origin:100% 50%;transform:scaleX(1.1434);">196</span>
<span class="t" style="top:401px;line-height:12px;height:12px;font-size:11px;color:#800080;font-weight:700;left:88.30px;transform-origin:0 50%;transform:scaleX(1.0854);">Reallocated event count</span>
<span class="t" style="top:401px;line-height:12px;height:12px;font-size:11px;color:#008080;font-weight:700;right:447.37px;transform-origin:100% 50%;transform:scaleX(1.1434);">200</span>
<span class="t" style="top:401px;line-height:12px;height:12px;font-size:11px;color:#008080;font-weight:700;right:380.37px;transform-origin:100% 50%;transform:scaleX(1.1434);">200</span>
<span class="t" style="top:401px;line-height:12px;height:12px;font-size:11px;color:#808000;font-weight:700;right:316.86px;transform-origin:100% 50%;transform:scaleX(1.1583);">0</span>
<span class="t" style="top:401px;line-height:12px;height:12px;font-size:11px;color:#008000;font-weight:700;right:196.76px;transform-origin:100% 50%;transform:scaleX(1.1583);">0</span>
<span class="t" style="top:418px;line-height:12px;height:12px;font-size:11px;color:#000080;font-weight:700;right:799.87px;transform-origin:100% 50%;transform:scaleX(1.1434);">197</span>
<span class="t" style="top:418px;line-height:12px;height:12px;font-size:11px;color:#800080;font-weight:700;left:88.30px;transform-origin:0 50%;transform:scaleX(1.0617);">Current pending sectors</span>
<span class="t" style="top:418px;line-height:12px;height:12px;font-size:11px;color:#008080;font-weight:700;right:447.37px;transform-origin:100% 50%;transform:scaleX(1.1434);">200</span>
<span class="t" style="top:418px;line-height:12px;height:12px;font-size:11px;color:#008080;font-weight:700;right:380.37px;transform-origin:100% 50%;transform:scaleX(1.1434);">200</span>
<span class="t" style="top:418px;line-height:12px;height:12px;font-size:11px;color:#808000;font-weight:700;right:316.86px;transform-origin:100% 50%;transform:scaleX(1.1583);">0</span>
<span class="t" style="top:418px;line-height:12px;height:12px;font-size:11px;color:#008000;font-weight:700;right:196.76px;transform-origin:100% 50%;transform:scaleX(1.1583);">0</span>
<span class="t" style="top:435px;line-height:12px;height:12px;font-size:11px;color:#000080;font-weight:700;right:799.87px;transform-origin:100% 50%;transform:scaleX(1.1434);">198</span>
<span class="t" style="top:435px;line-height:12px;height:12px;font-size:11px;color:#800080;font-weight:700;left:88.30px;transform-origin:0 50%;transform:scaleX(1.0180);">Offline scan UNC sectors</span>
<span class="t" style="top:435px;line-height:12px;height:12px;font-size:11px;color:#008080;font-weight:700;right:447.37px;transform-origin:100% 50%;transform:scaleX(1.1434);">100</span>
<span class="t" style="top:435px;line-height:12px;height:12px;font-size:11px;color:#008080;font-weight:700;right:380.37px;transform-origin:100% 50%;transform:scaleX(1.1434);">253</span>
<span class="t" style="top:435px;line-height:12px;height:12px;font-size:11px;color:#808000;font-weight:700;right:316.86px;transform-origin:100% 50%;transform:scaleX(1.1583);">0</span>
<span class="t" style="top:435px;line-height:12px;height:12px;font-size:11px;color:#008000;font-weight:700;right:196.76px;transform-origin:100% 50%;transform:scaleX(1.1583);">0</span>
<span class="t" style="top:452px;line-height:12px;height:12px;font-size:11px;color:#000080;font-weight:700;right:799.87px;transform-origin:100% 50%;transform:scaleX(1.1434);">199</span>
<span class="t" style="top:452px;line-height:12px;height:12px;font-size:11px;color:#000000;font-weight:700;left:88.30px;transform-origin:0 50%;transform:scaleX(1.0419);">Ultra DMA CRC errors</span>
<span class="t" style="top:452px;line-height:12px;height:12px;font-size:11px;color:#008080;font-weight:700;right:447.37px;transform-origin:100% 50%;transform:scaleX(1.1434);">200</span>
<span class="t" style="top:452px;line-height:12px;height:12px;font-size:11px;color:#008080;font-weight:700;right:380.37px;transform-origin:100% 50%;transform:scaleX(1.1434);">200</span>
<span class="t" style="top:452px;line-height:12px;height:12px;font-size:11px;color:#808000;font-weight:700;right:316.86px;transform-origin:100% 50%;transform:scaleX(1.1583);">0</span>
<span class="t" style="top:452px;line-height:12px;height:12px;font-size:11px;color:#008000;font-weight:700;right:196.76px;transform-origin:100% 50%;transform:scaleX(1.1583);">0</span>
<span class="t" style="top:469px;line-height:12px;height:12px;font-size:11px;color:#000080;font-weight:700;right:799.87px;transform-origin:100% 50%;transform:scaleX(1.1434);">200</span>
<span class="t" style="top:469px;line-height:12px;height:12px;font-size:11px;color:#800080;font-weight:700;left:88.30px;transform-origin:0 50%;transform:scaleX(1.1049);">Multi zone error rate</span>
<span class="t" style="top:469px;line-height:12px;height:12px;font-size:11px;color:#008080;font-weight:700;right:447.37px;transform-origin:100% 50%;transform:scaleX(1.1434);">100</span>
<span class="t" style="top:469px;line-height:12px;height:12px;font-size:11px;color:#008080;font-weight:700;right:380.37px;transform-origin:100% 50%;transform:scaleX(1.1434);">253</span>
<span class="t" style="top:469px;line-height:12px;height:12px;font-size:11px;color:#808000;font-weight:700;right:316.86px;transform-origin:100% 50%;transform:scaleX(1.1583);">0</span>
<span class="t" style="top:469px;line-height:12px;height:12px;font-size:11px;color:#008000;font-weight:700;right:196.76px;transform-origin:100% 50%;transform:scaleX(1.1583);">0</span>
<span class="t" style="top:173px;line-height:14px;height:14px;font-size:12px;color:#666666;left:797.40px;transform-origin:0 50%;transform:scaleX(0.9733);">API</span>
<span class="t" style="top:195px;line-height:14px;height:14px;font-size:12px;color:#666666;left:797.40px;transform-origin:0 50%;transform:scaleX(0.9096);">PIO</span>
<span class="t" style="top:258px;line-height:14px;height:14px;font-size:12.5px;color:#000;left:788.20px;transform-origin:0 50%;transform:scaleX(0.9744);">Sleep</span>
<span class="t" style="top:320px;line-height:14px;height:14px;font-size:12.5px;color:#000;left:787.50px;transform-origin:0 50%;transform:scaleX(1.0013);">Recall</span>
<span class="t" style="top:505px;line-height:14px;height:14px;font-size:12.5px;color:#000;left:787.87px;transform-origin:0 50%;transform:scaleX(0.9293);">Passp</span>
<span class="t" style="top:561px;line-height:14px;height:14px;font-size:12.5px;color:#000;left:795.20px;transform-origin:0 50%;transform:scaleX(0.9366);">Sound</span>
<span class="t" style="top:584px;line-height:14px;height:14px;font-size:12.5px;color:#000;left:794.21px;transform-origin:0 50%;transform:scaleX(0.9879);">Hints</span>
<span class="t" style="top:528px;line-height:14px;height:14px;font-size:12.5px;color:#000;left:81.10px;transform-origin:0 50%;transform:scaleX(1.0184);">Get S.M.A.R.T.</span>
<span class="t" style="top:528px;line-height:14px;height:14px;font-size:12.5px;color:#000;left:229.20px;transform-origin:0 50%;transform:scaleX(1.0094);">Status:</span>
<span class="t" style="top:528px;line-height:14px;height:14px;font-size:12.5px;color:#004000;left:287.50px;transform-origin:0 50%;transform:scaleX(0.8724);">GOOD</span>
<span class="t" style="top:528px;line-height:14px;height:14px;font-size:12.5px;color:#000;left:379.25px;transform-origin:0 50%;transform:scaleX(0.9478);">HEX raw values</span>
<span class="t" style="top:528px;line-height:14px;height:14px;font-size:12.5px;color:#000;left:595.73px;transform-origin:0 50%;transform:scaleX(0.9745);">IBM super smart:</span>
<span class="t" style="top:557px;line-height:15px;height:15px;font-size:13px;color:#000;left:43.40px;transform-origin:0 50%;transform:scaleX(1.0184);">12:43:53</span>
<span class="t" style="top:577px;line-height:15px;height:15px;font-size:13px;color:#000;left:43.40px;transform-origin:0 50%;transform:scaleX(1.0184);">12:44:19</span>
<span class="t" style="top:597px;line-height:15px;height:15px;font-size:13px;color:#000;left:43.40px;transform-origin:0 50%;transform:scaleX(1.0184);">12:44:19</span>
<span class="t" style="top:557px;line-height:15px;height:15px;font-size:13px;color:#000;left:110.30px;transform-origin:0 50%;transform:scaleX(0.9971);">Model:</span>
<span class="t" style="top:557px;line-height:15px;height:15px;font-size:13px;color:#000;left:154.50px;transform-origin:0 50%;transform:scaleX(0.8481);">WDC</span>
<span class="t" style="top:557px;line-height:15px;height:15px;font-size:13px;color:#000;left:186.40px;transform-origin:0 50%;transform:scaleX(0.8861);">WD20EFRX-68EUZN0;</span>
<span class="t" style="top:557px;line-height:15px;height:15px;font-size:13px;color:#000;left:315.90px;transform-origin:0 50%;transform:scaleX(0.8986);">Capacity</span>
<span class="t" style="top:557px;line-height:15px;height:15px;font-size:13px;color:#000;left:367.60px;transform-origin:0 50%;transform:scaleX(0.9449);">3907029168</span>
<span class="t" style="top:557px;line-height:15px;height:15px;font-size:13px;color:#000;left:440.49px;transform-origin:0 50%;transform:scaleX(0.9071);">LBAs;</span>
<span class="t" style="top:557px;line-height:15px;height:15px;font-size:13px;color:#000;left:477.60px;transform-origin:0 50%;transform:scaleX(0.9592);">SN:</span>
<span class="t" style="top:557px;line-height:15px;height:15px;font-size:13px;color:#000;left:502.90px;transform-origin:0 50%;transform:scaleX(0.9122);">WD-WCC4M3CZD6P0;</span>
<span class="t" style="top:557px;line-height:15px;height:15px;font-size:13px;color:#000;left:631.81px;transform-origin:0 50%;transform:scaleX(0.9920);">FW:</span>
<span class="t" style="top:557px;line-height:15px;height:15px;font-size:13px;color:#000;left:660.50px;transform-origin:0 50%;transform:scaleX(0.9597);">82.00A82</span>
<span class="t" style="top:577px;line-height:15px;height:15px;font-size:13px;color:#000;left:111.50px;transform-origin:0 50%;transform:scaleX(0.8340);">Get</span>
<span class="t" style="top:577px;line-height:15px;height:15px;font-size:13px;color:#000;left:135.00px;transform-origin:0 50%;transform:scaleX(0.9804);">S.M.A.R.T.</span>
<span class="t" style="top:577px;line-height:15px;height:15px;font-size:13px;color:#000;left:201.10px;transform-origin:0 50%;transform:scaleX(0.9836);">command...</span>
<span class="t" style="top:577px;line-height:15px;height:15px;font-size:13px;color:#000;left:273.10px;transform-origin:0 50%;transform:scaleX(0.7744);">OK</span>
<span class="t" style="top:597px;line-height:15px;height:15px;font-size:13px;color:#0000ff;left:111.30px;transform-origin:0 50%;transform:scaleX(0.8847);">SMART</span>
<span class="t" style="top:597px;line-height:15px;height:15px;font-size:13px;color:#0000ff;left:157.60px;transform-origin:0 50%;transform:scaleX(0.9379);">status</span>
<span class="t" style="top:597px;line-height:15px;height:15px;font-size:13px;color:#0000ff;left:197.30px;transform-origin:0 50%;transform:scaleX(1.0000);">=</span>
<span class="t" style="top:597px;line-height:15px;height:15px;font-size:13px;color:#0000ff;left:208.90px;transform-origin:0 50%;transform:scaleX(0.8415);">GOOD</span>
</body></html>
